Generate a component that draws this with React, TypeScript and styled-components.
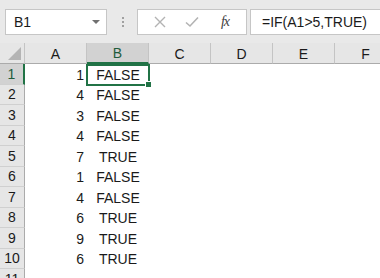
import { Fragment } from 'react'
import styled, { createGlobalStyle } from 'styled-components'

const COLORS = {
  chrome: '#e9e9e9',
  header: '#e6e6e6',
  headerActive: '#d2d2d2',
  headerLine: '#ababab',
  headerSep: '#c4c4c4',
  boxBorder: '#c6c6c6',
  green: '#217346',
  text: '#1a1a1a',
}

const GlobalStyle = createGlobalStyle`
  html, body { margin: 0; padding: 0; background: white; }
  body {
    width: 380px;
    height: 278px;
    overflow: hidden;
    font-family: "Liberation Sans", Arial, sans-serif;
    color: ${COLORS.text};
  }
`

const Sheet = styled.div`
  width: 380px;
  height: 278px;
  overflow: hidden;
  background: white;
`

const FormulaBar = styled.div`
  display: flex;
  align-items: center;
  height: 43px;
  padding: 0 0 0 5px;
  box-sizing: border-box;
  background: ${COLORS.chrome};
`

const Box = styled.div`
  display: flex;
  align-items: center;
  height: 26px;
  box-sizing: border-box;
  background: white;
  border: 1px solid ${COLORS.boxBorder};
`

const NameBox = styled(Box)`
  width: 102px;
  padding: 0 6px 0 8px;
  justify-content: space-between;
  font-size: 14px;
`

const Caret = styled.span`
  width: 0;
  height: 0;
  border-left: 4px solid transparent;
  border-right: 4px solid transparent;
  border-top: 4px solid #707070;
`

const Grip = styled.div`
  display: flex;
  flex-direction: column;
  gap: 2px;
  margin: 0 13px 0 15px;

  span {
    width: 2px;
    height: 2px;
    background: #a0a0a0;
  }
`

const ActionBox = styled(Box)`
  width: 110px;
  padding: 0 0 0 15px;
`

const Action = styled.span<{ w: number }>`
  display: flex;
  align-items: center;
  justify-content: center;
  width: ${p => p.w}px;
`

const Fx = styled.span`
  font-family: "Liberation Serif", "Times New Roman", serif;
  font-style: italic;
  font-size: 14px;
  color: #404040;
  letter-spacing: -1px;
`

const FormulaInput = styled(Box)`
  flex: 1;
  margin-left: 3px;
  padding-left: 11px;
  border-right: none;
  font-size: 14px;
`

const Grid = styled.div`
  display: grid;
  grid-template-columns: 25px repeat(6, 62px);
  grid-template-rows: 21px;
  grid-auto-rows: 20.5px;
`

const Corner = styled.div`
  position: relative;
  background: ${COLORS.header};
  border-right: 1px solid ${COLORS.headerSep};
  border-bottom: 1px solid ${COLORS.headerLine};
  box-sizing: border-box;

  &::after {
    content: '';
    position: absolute;
    right: 3px;
    bottom: 3px;
    border-left: 13px solid transparent;
    border-bottom: 13px solid #b4b4b4;
  }
`

const ColHead = styled.div<{ active?: boolean }>`
  display: flex;
  align-items: center;
  justify-content: center;
  box-sizing: border-box;
  font-size: 14px;
  padding-top: 1px;
  background: ${p => (p.active ? COLORS.headerActive : COLORS.header)};
  color: ${p => (p.active ? '#1f5c3c' : COLORS.text)};
  border-right: 1px solid ${COLORS.headerSep};
  border-bottom: ${p => (p.active ? `2px solid ${COLORS.green}` : `1px solid ${COLORS.headerLine}`)};
`

const RowHead = styled.div<{ active?: boolean }>`
  display: flex;
  align-items: center;
  justify-content: center;
  box-sizing: border-box;
  font-size: 14px;
  background: ${p => (p.active ? COLORS.headerActive : COLORS.header)};
  color: ${p => (p.active ? '#1f5c3c' : COLORS.text)};
  border-bottom: 1px solid #d0d0d0;
  border-right: ${p => (p.active ? `2px solid ${COLORS.green}` : `1px solid ${COLORS.headerLine}`)};
`

const Cell = styled.div<{ align?: 'left' | 'center' | 'right' }>`
  position: relative;
  display: flex;
  align-items: center;
  justify-content: ${p =>
    p.align === 'right' ? 'flex-end' : p.align === 'center' ? 'center' : 'flex-start'};
  padding: 1px 3px 0;
  box-sizing: border-box;
  font-size: 14px;
`

const Selection = styled.div`
  position: absolute;
  left: -1px;
  top: 0;
  right: -1px;
  bottom: -1px;
  border: 2px solid ${COLORS.green};
  pointer-events: none;

  &::after {
    content: '';
    position: absolute;
    right: -4px;
    bottom: -4px;
    width: 5px;
    height: 5px;
    background: ${COLORS.green};
    border: 1px solid white;
  }
`

const columns = ['A', 'B', 'C', 'D', 'E', 'F']
const values = [1, 4, 3, 4, 7, 1, 4, 6, 9, 6]

export default function App() {
  return (
    <Sheet>
      <GlobalStyle />
      <FormulaBar>
        <NameBox>
          <span>B1</span>
          <Caret />
        </NameBox>
        <Grip>
          <span />
          <span />
          <span />
        </Grip>
        <ActionBox>
          <Action w={14}>
            <svg width="12" height="12" viewBox="0 0 12 12">
              <path d="M1 1 L11 11 M11 1 L1 11" stroke="#b3b3b3" strokeWidth="1.4" fill="none" />
            </svg>
          </Action>
          <Action w={50}>
            <svg width="14" height="12" viewBox="0 0 14 12">
              <path d="M1 6.5 L5 10 L13 1.5" stroke="#b3b3b3" strokeWidth="1.6" fill="none" />
            </svg>
          </Action>
          <Action w={16}>
            <Fx>fx</Fx>
          </Action>
        </ActionBox>
        <FormulaInput>=IF(A1&gt;5,TRUE)</FormulaInput>
      </FormulaBar>
      <Grid>
        <Corner />
        {columns.map(c => (
          <ColHead key={c} active={c === 'B'}>
            {c}
          </ColHead>
        ))}
        {values.map((v, i) => (
          <Fragment key={i}>
            <RowHead active={i === 0}>{i + 1}</RowHead>
            <Cell align="right">{v}</Cell>
            <Cell align="center">
              {v > 5 ? 'TRUE' : 'FALSE'}
              {i === 0 && <Selection />}
            </Cell>
            <Cell />
            <Cell />
            <Cell />
            <Cell />
          </Fragment>
        ))}
        <RowHead>11</RowHead>
      </Grid>
    </Sheet>
  )
}
